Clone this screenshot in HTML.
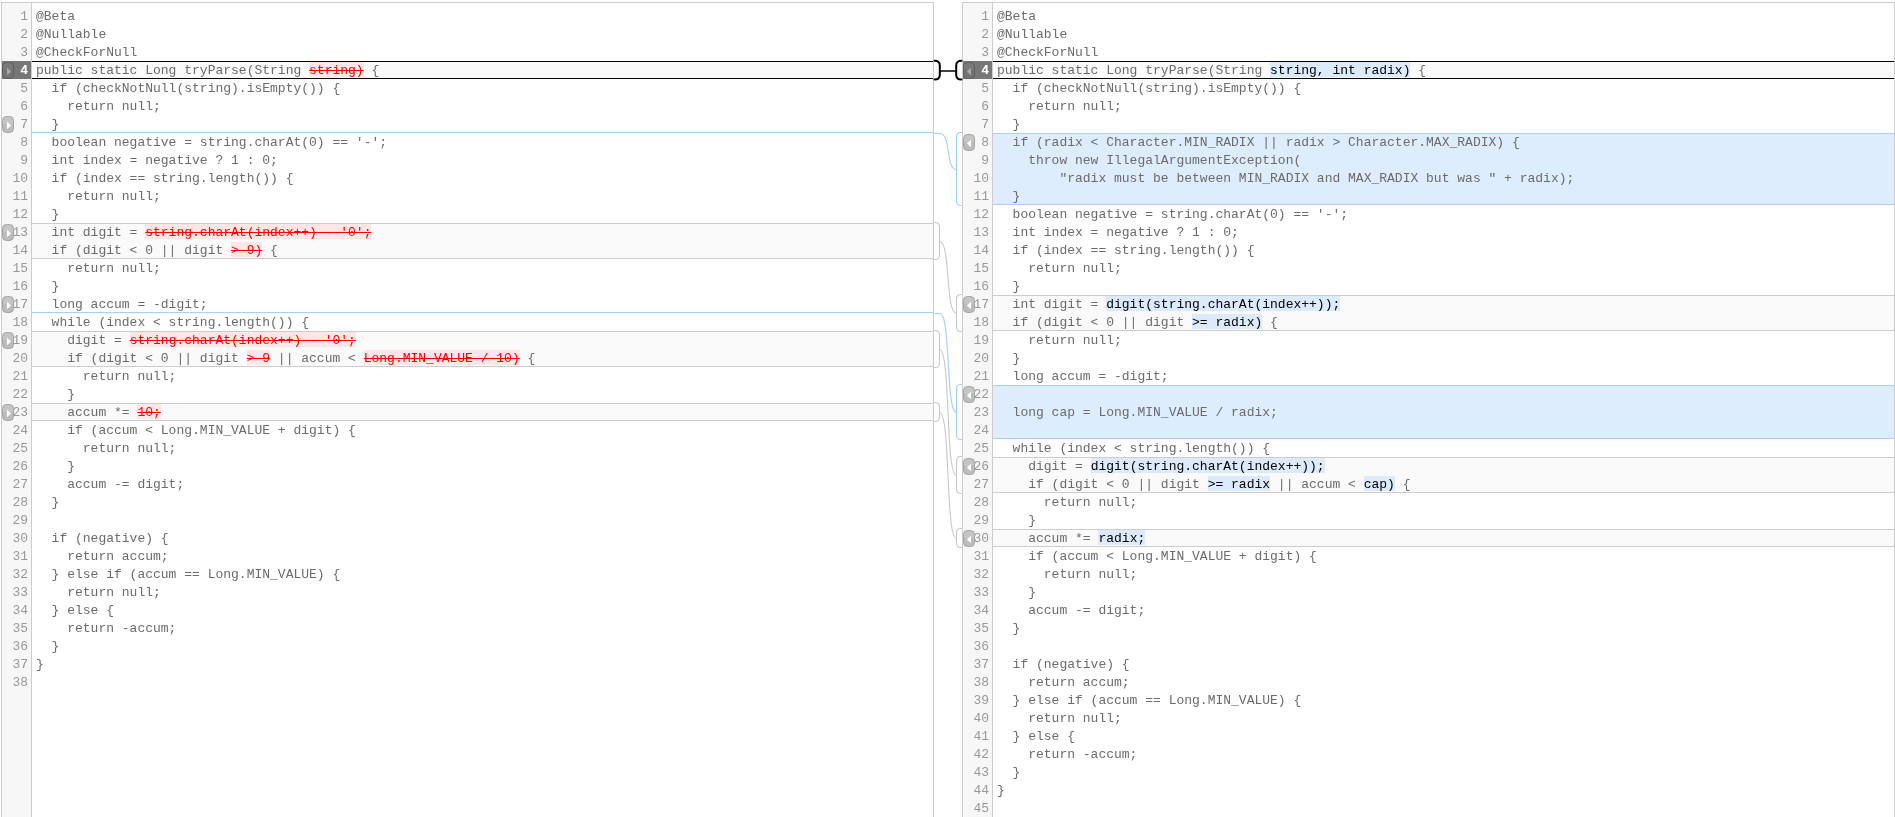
<!DOCTYPE html>
<html><head><meta charset="utf-8"><style>
*{margin:0;padding:0;box-sizing:content-box}
html,body{width:1895px;height:817px;overflow:hidden;background:#fff}
body{position:relative;font-family:"Liberation Mono",monospace;font-size:13px}
#wrap{position:absolute;left:0;top:0;width:1895px;height:817px;will-change:transform}
.ed{position:absolute;top:2px;height:900px;border:1px solid #ccc;background:#fff}
.gut{position:absolute;top:3px;width:29px;height:900px;background:#f7f7f7;border-right:1px solid #ccc}
.blk{position:absolute}
.blk.g{background:#fafafa;border-top:1px solid #ccc;border-bottom:1px solid #ccc}
.blk.b{background:#deedfd;border-top:1px solid #a5d0fa;border-bottom:1px solid #a5d0fa}
.insl{position:absolute;height:1px;background:#a5d0fa}
.sel{position:absolute;height:16px;background:#fafafa;border-top:1px solid #000;border-bottom:1px solid #000}
.gsel{position:absolute;width:29px;height:18px;background:#777}
.ln{position:absolute;width:26px;height:18px;line-height:18px;margin-top:1px;text-align:right;color:#999}
.ln.s{color:#fff;font-weight:bold}
.tx{position:absolute;height:18px;line-height:18px;margin-top:1px;white-space:pre;color:#6b6b6b}
.del{color:#f00;text-decoration:line-through;padding-top:1px;background:linear-gradient(#fde6e6,#fde6e6) no-repeat 0 0/100% 15px}
.ins{color:#000;padding-top:1px;background:linear-gradient(#dcebfc,#dcebfc) no-repeat 0 0/100% 15px}
.bsv{position:absolute}

</style></head><body><div id="wrap">
<div class="ed" style="left:1px;width:931px"></div>
<div class="gut" style="left:2px"></div>
<div class="blk g" style="left:32px;top:223px;width:901px;height:34px"></div>
<div class="blk g" style="left:32px;top:331px;width:901px;height:34px"></div>
<div class="blk g" style="left:32px;top:403px;width:901px;height:16px"></div>
<div class="insl" style="left:32px;top:132px;width:901px"></div>
<div class="insl" style="left:32px;top:312px;width:901px"></div>
<div class="sel" style="left:32px;top:61px;width:901px"></div>
<div class="gsel" style="left:2px;top:61px"></div>
<div class="ln" style="left:2px;top:7px">1</div>
<div class="tx" style="left:36px;top:7px">@Beta</div>
<div class="ln" style="left:2px;top:25px">2</div>
<div class="tx" style="left:36px;top:25px">@Nullable</div>
<div class="ln" style="left:2px;top:43px">3</div>
<div class="tx" style="left:36px;top:43px">@CheckForNull</div>
<div class="ln s" style="left:2px;top:61px">4</div>
<div class="tx" style="left:36px;top:61px">public static Long tryParse(String <span class="del">string)</span> {</div>
<div class="ln" style="left:2px;top:79px">5</div>
<div class="tx" style="left:36px;top:79px">  if (checkNotNull(string).isEmpty()) {</div>
<div class="ln" style="left:2px;top:97px">6</div>
<div class="tx" style="left:36px;top:97px">    return null;</div>
<div class="ln" style="left:2px;top:115px">7</div>
<div class="tx" style="left:36px;top:115px">  }</div>
<div class="ln" style="left:2px;top:133px">8</div>
<div class="tx" style="left:36px;top:133px">  boolean negative = string.charAt(0) == &#x27;-&#x27;;</div>
<div class="ln" style="left:2px;top:151px">9</div>
<div class="tx" style="left:36px;top:151px">  int index = negative ? 1 : 0;</div>
<div class="ln" style="left:2px;top:169px">10</div>
<div class="tx" style="left:36px;top:169px">  if (index == string.length()) {</div>
<div class="ln" style="left:2px;top:187px">11</div>
<div class="tx" style="left:36px;top:187px">    return null;</div>
<div class="ln" style="left:2px;top:205px">12</div>
<div class="tx" style="left:36px;top:205px">  }</div>
<div class="ln" style="left:2px;top:223px">13</div>
<div class="tx" style="left:36px;top:223px">  int digit = <span class="del">string.charAt(index++) - &#x27;0&#x27;;</span></div>
<div class="ln" style="left:2px;top:241px">14</div>
<div class="tx" style="left:36px;top:241px">  if (digit &lt; 0 || digit <span class="del">&gt; 9)</span> {</div>
<div class="ln" style="left:2px;top:259px">15</div>
<div class="tx" style="left:36px;top:259px">    return null;</div>
<div class="ln" style="left:2px;top:277px">16</div>
<div class="tx" style="left:36px;top:277px">  }</div>
<div class="ln" style="left:2px;top:295px">17</div>
<div class="tx" style="left:36px;top:295px">  long accum = -digit;</div>
<div class="ln" style="left:2px;top:313px">18</div>
<div class="tx" style="left:36px;top:313px">  while (index &lt; string.length()) {</div>
<div class="ln" style="left:2px;top:331px">19</div>
<div class="tx" style="left:36px;top:331px">    digit = <span class="del">string.charAt(index++) - &#x27;0&#x27;;</span></div>
<div class="ln" style="left:2px;top:349px">20</div>
<div class="tx" style="left:36px;top:349px">    if (digit &lt; 0 || digit <span class="del">&gt; 9</span> || accum &lt; <span class="del">Long.MIN_VALUE / 10)</span> {</div>
<div class="ln" style="left:2px;top:367px">21</div>
<div class="tx" style="left:36px;top:367px">      return null;</div>
<div class="ln" style="left:2px;top:385px">22</div>
<div class="tx" style="left:36px;top:385px">    }</div>
<div class="ln" style="left:2px;top:403px">23</div>
<div class="tx" style="left:36px;top:403px">    accum *= <span class="del">10;</span></div>
<div class="ln" style="left:2px;top:421px">24</div>
<div class="tx" style="left:36px;top:421px">    if (accum &lt; Long.MIN_VALUE + digit) {</div>
<div class="ln" style="left:2px;top:439px">25</div>
<div class="tx" style="left:36px;top:439px">      return null;</div>
<div class="ln" style="left:2px;top:457px">26</div>
<div class="tx" style="left:36px;top:457px">    }</div>
<div class="ln" style="left:2px;top:475px">27</div>
<div class="tx" style="left:36px;top:475px">    accum -= digit;</div>
<div class="ln" style="left:2px;top:493px">28</div>
<div class="tx" style="left:36px;top:493px">  }</div>
<div class="ln" style="left:2px;top:511px">29</div>
<div class="tx" style="left:36px;top:511px"></div>
<div class="ln" style="left:2px;top:529px">30</div>
<div class="tx" style="left:36px;top:529px">  if (negative) {</div>
<div class="ln" style="left:2px;top:547px">31</div>
<div class="tx" style="left:36px;top:547px">    return accum;</div>
<div class="ln" style="left:2px;top:565px">32</div>
<div class="tx" style="left:36px;top:565px">  } else if (accum == Long.MIN_VALUE) {</div>
<div class="ln" style="left:2px;top:583px">33</div>
<div class="tx" style="left:36px;top:583px">    return null;</div>
<div class="ln" style="left:2px;top:601px">34</div>
<div class="tx" style="left:36px;top:601px">  } else {</div>
<div class="ln" style="left:2px;top:619px">35</div>
<div class="tx" style="left:36px;top:619px">    return -accum;</div>
<div class="ln" style="left:2px;top:637px">36</div>
<div class="tx" style="left:36px;top:637px">  }</div>
<div class="ln" style="left:2px;top:655px">37</div>
<div class="tx" style="left:36px;top:655px">}</div>
<div class="ln" style="left:2px;top:673px">38</div>
<div class="tx" style="left:36px;top:673px"></div>
<svg class="bsv" style="left:2px;top:61px" width="14" height="20"><defs><linearGradient id="gL4" x1="0" y1="0" x2="0" y2="1"><stop offset="0.5" stop-color="#7a7a7a"/><stop offset="0.5" stop-color="#737373"/></linearGradient></defs><rect x="0.5" y="1.5" width="11" height="16" rx="4" fill="url(#gL4)" stroke="#5e5e5e"/><polygon points="5,6.8 9.2,10.5 5,14.2" fill="#aaa"/></svg>
<svg class="bsv" style="left:2px;top:115px" width="14" height="20"><defs><linearGradient id="gL7" x1="0" y1="0" x2="0" y2="1"><stop offset="0.5" stop-color="#c5c5c5"/><stop offset="0.5" stop-color="#bcbcbc"/></linearGradient></defs><rect x="0.5" y="1.5" width="11" height="16" rx="4" fill="url(#gL7)" stroke="#a3a3a3"/><polygon points="5,6.8 9.2,10.5 5,14.2" fill="#fff"/></svg>
<svg class="bsv" style="left:2px;top:223px" width="14" height="20"><defs><linearGradient id="gL13" x1="0" y1="0" x2="0" y2="1"><stop offset="0.5" stop-color="#c5c5c5"/><stop offset="0.5" stop-color="#bcbcbc"/></linearGradient></defs><rect x="0.5" y="1.5" width="11" height="16" rx="4" fill="url(#gL13)" stroke="#a3a3a3"/><polygon points="5,6.8 9.2,10.5 5,14.2" fill="#fff"/></svg>
<svg class="bsv" style="left:2px;top:295px" width="14" height="20"><defs><linearGradient id="gL17" x1="0" y1="0" x2="0" y2="1"><stop offset="0.5" stop-color="#c5c5c5"/><stop offset="0.5" stop-color="#bcbcbc"/></linearGradient></defs><rect x="0.5" y="1.5" width="11" height="16" rx="4" fill="url(#gL17)" stroke="#a3a3a3"/><polygon points="5,6.8 9.2,10.5 5,14.2" fill="#fff"/></svg>
<svg class="bsv" style="left:2px;top:331px" width="14" height="20"><defs><linearGradient id="gL19" x1="0" y1="0" x2="0" y2="1"><stop offset="0.5" stop-color="#c5c5c5"/><stop offset="0.5" stop-color="#bcbcbc"/></linearGradient></defs><rect x="0.5" y="1.5" width="11" height="16" rx="4" fill="url(#gL19)" stroke="#a3a3a3"/><polygon points="5,6.8 9.2,10.5 5,14.2" fill="#fff"/></svg>
<svg class="bsv" style="left:2px;top:403px" width="14" height="20"><defs><linearGradient id="gL23" x1="0" y1="0" x2="0" y2="1"><stop offset="0.5" stop-color="#c5c5c5"/><stop offset="0.5" stop-color="#bcbcbc"/></linearGradient></defs><rect x="0.5" y="1.5" width="11" height="16" rx="4" fill="url(#gL23)" stroke="#a3a3a3"/><polygon points="5,6.8 9.2,10.5 5,14.2" fill="#fff"/></svg>
<div class="ed" style="left:962px;width:931px"></div>
<div class="gut" style="left:963px"></div>
<div class="blk b" style="left:993px;top:133px;width:901px;height:70px"></div>
<div class="blk g" style="left:993px;top:295px;width:901px;height:34px"></div>
<div class="blk b" style="left:993px;top:385px;width:901px;height:52px"></div>
<div class="blk g" style="left:993px;top:457px;width:901px;height:34px"></div>
<div class="blk g" style="left:993px;top:529px;width:901px;height:16px"></div>
<div class="sel" style="left:993px;top:61px;width:901px"></div>
<div class="gsel" style="left:963px;top:61px"></div>
<div class="ln" style="left:963px;top:7px">1</div>
<div class="tx" style="left:997px;top:7px">@Beta</div>
<div class="ln" style="left:963px;top:25px">2</div>
<div class="tx" style="left:997px;top:25px">@Nullable</div>
<div class="ln" style="left:963px;top:43px">3</div>
<div class="tx" style="left:997px;top:43px">@CheckForNull</div>
<div class="ln s" style="left:963px;top:61px">4</div>
<div class="tx" style="left:997px;top:61px">public static Long tryParse(String <span class="ins">string, int radix)</span> {</div>
<div class="ln" style="left:963px;top:79px">5</div>
<div class="tx" style="left:997px;top:79px">  if (checkNotNull(string).isEmpty()) {</div>
<div class="ln" style="left:963px;top:97px">6</div>
<div class="tx" style="left:997px;top:97px">    return null;</div>
<div class="ln" style="left:963px;top:115px">7</div>
<div class="tx" style="left:997px;top:115px">  }</div>
<div class="ln" style="left:963px;top:133px">8</div>
<div class="tx" style="left:997px;top:133px">  if (radix &lt; Character.MIN_RADIX || radix &gt; Character.MAX_RADIX) {</div>
<div class="ln" style="left:963px;top:151px">9</div>
<div class="tx" style="left:997px;top:151px">    throw new IllegalArgumentException(</div>
<div class="ln" style="left:963px;top:169px">10</div>
<div class="tx" style="left:997px;top:169px">        &quot;radix must be between MIN_RADIX and MAX_RADIX but was &quot; + radix);</div>
<div class="ln" style="left:963px;top:187px">11</div>
<div class="tx" style="left:997px;top:187px">  }</div>
<div class="ln" style="left:963px;top:205px">12</div>
<div class="tx" style="left:997px;top:205px">  boolean negative = string.charAt(0) == &#x27;-&#x27;;</div>
<div class="ln" style="left:963px;top:223px">13</div>
<div class="tx" style="left:997px;top:223px">  int index = negative ? 1 : 0;</div>
<div class="ln" style="left:963px;top:241px">14</div>
<div class="tx" style="left:997px;top:241px">  if (index == string.length()) {</div>
<div class="ln" style="left:963px;top:259px">15</div>
<div class="tx" style="left:997px;top:259px">    return null;</div>
<div class="ln" style="left:963px;top:277px">16</div>
<div class="tx" style="left:997px;top:277px">  }</div>
<div class="ln" style="left:963px;top:295px">17</div>
<div class="tx" style="left:997px;top:295px">  int digit = <span class="ins">digit(string.charAt(index++));</span></div>
<div class="ln" style="left:963px;top:313px">18</div>
<div class="tx" style="left:997px;top:313px">  if (digit &lt; 0 || digit <span class="ins">&gt;= radix)</span> {</div>
<div class="ln" style="left:963px;top:331px">19</div>
<div class="tx" style="left:997px;top:331px">    return null;</div>
<div class="ln" style="left:963px;top:349px">20</div>
<div class="tx" style="left:997px;top:349px">  }</div>
<div class="ln" style="left:963px;top:367px">21</div>
<div class="tx" style="left:997px;top:367px">  long accum = -digit;</div>
<div class="ln" style="left:963px;top:385px">22</div>
<div class="tx" style="left:997px;top:385px"></div>
<div class="ln" style="left:963px;top:403px">23</div>
<div class="tx" style="left:997px;top:403px">  long cap = Long.MIN_VALUE / radix;</div>
<div class="ln" style="left:963px;top:421px">24</div>
<div class="tx" style="left:997px;top:421px"></div>
<div class="ln" style="left:963px;top:439px">25</div>
<div class="tx" style="left:997px;top:439px">  while (index &lt; string.length()) {</div>
<div class="ln" style="left:963px;top:457px">26</div>
<div class="tx" style="left:997px;top:457px">    digit = <span class="ins">digit(string.charAt(index++));</span></div>
<div class="ln" style="left:963px;top:475px">27</div>
<div class="tx" style="left:997px;top:475px">    if (digit &lt; 0 || digit <span class="ins">&gt;= radix</span> || accum &lt; <span class="ins">cap)</span> {</div>
<div class="ln" style="left:963px;top:493px">28</div>
<div class="tx" style="left:997px;top:493px">      return null;</div>
<div class="ln" style="left:963px;top:511px">29</div>
<div class="tx" style="left:997px;top:511px">    }</div>
<div class="ln" style="left:963px;top:529px">30</div>
<div class="tx" style="left:997px;top:529px">    accum *= <span class="ins">radix;</span></div>
<div class="ln" style="left:963px;top:547px">31</div>
<div class="tx" style="left:997px;top:547px">    if (accum &lt; Long.MIN_VALUE + digit) {</div>
<div class="ln" style="left:963px;top:565px">32</div>
<div class="tx" style="left:997px;top:565px">      return null;</div>
<div class="ln" style="left:963px;top:583px">33</div>
<div class="tx" style="left:997px;top:583px">    }</div>
<div class="ln" style="left:963px;top:601px">34</div>
<div class="tx" style="left:997px;top:601px">    accum -= digit;</div>
<div class="ln" style="left:963px;top:619px">35</div>
<div class="tx" style="left:997px;top:619px">  }</div>
<div class="ln" style="left:963px;top:637px">36</div>
<div class="tx" style="left:997px;top:637px"></div>
<div class="ln" style="left:963px;top:655px">37</div>
<div class="tx" style="left:997px;top:655px">  if (negative) {</div>
<div class="ln" style="left:963px;top:673px">38</div>
<div class="tx" style="left:997px;top:673px">    return accum;</div>
<div class="ln" style="left:963px;top:691px">39</div>
<div class="tx" style="left:997px;top:691px">  } else if (accum == Long.MIN_VALUE) {</div>
<div class="ln" style="left:963px;top:709px">40</div>
<div class="tx" style="left:997px;top:709px">    return null;</div>
<div class="ln" style="left:963px;top:727px">41</div>
<div class="tx" style="left:997px;top:727px">  } else {</div>
<div class="ln" style="left:963px;top:745px">42</div>
<div class="tx" style="left:997px;top:745px">    return -accum;</div>
<div class="ln" style="left:963px;top:763px">43</div>
<div class="tx" style="left:997px;top:763px">  }</div>
<div class="ln" style="left:963px;top:781px">44</div>
<div class="tx" style="left:997px;top:781px">}</div>
<div class="ln" style="left:963px;top:799px">45</div>
<div class="tx" style="left:997px;top:799px"></div>
<svg class="bsv" style="left:963px;top:61px" width="14" height="20"><defs><linearGradient id="gR4" x1="0" y1="0" x2="0" y2="1"><stop offset="0.5" stop-color="#7a7a7a"/><stop offset="0.5" stop-color="#737373"/></linearGradient></defs><rect x="0.5" y="1.5" width="11" height="16" rx="4" fill="url(#gR4)" stroke="#5e5e5e"/><polygon points="8,6.8 3.8,10.5 8,14.2" fill="#aaa"/></svg>
<svg class="bsv" style="left:963px;top:133px" width="14" height="20"><defs><linearGradient id="gR8" x1="0" y1="0" x2="0" y2="1"><stop offset="0.5" stop-color="#c5c5c5"/><stop offset="0.5" stop-color="#bcbcbc"/></linearGradient></defs><rect x="0.5" y="1.5" width="11" height="16" rx="4" fill="url(#gR8)" stroke="#a3a3a3"/><polygon points="8,6.8 3.8,10.5 8,14.2" fill="#fff"/></svg>
<svg class="bsv" style="left:963px;top:295px" width="14" height="20"><defs><linearGradient id="gR17" x1="0" y1="0" x2="0" y2="1"><stop offset="0.5" stop-color="#c5c5c5"/><stop offset="0.5" stop-color="#bcbcbc"/></linearGradient></defs><rect x="0.5" y="1.5" width="11" height="16" rx="4" fill="url(#gR17)" stroke="#a3a3a3"/><polygon points="8,6.8 3.8,10.5 8,14.2" fill="#fff"/></svg>
<svg class="bsv" style="left:963px;top:385px" width="14" height="20"><defs><linearGradient id="gR22" x1="0" y1="0" x2="0" y2="1"><stop offset="0.5" stop-color="#c5c5c5"/><stop offset="0.5" stop-color="#bcbcbc"/></linearGradient></defs><rect x="0.5" y="1.5" width="11" height="16" rx="4" fill="url(#gR22)" stroke="#a3a3a3"/><polygon points="8,6.8 3.8,10.5 8,14.2" fill="#fff"/></svg>
<svg class="bsv" style="left:963px;top:457px" width="14" height="20"><defs><linearGradient id="gR26" x1="0" y1="0" x2="0" y2="1"><stop offset="0.5" stop-color="#c5c5c5"/><stop offset="0.5" stop-color="#bcbcbc"/></linearGradient></defs><rect x="0.5" y="1.5" width="11" height="16" rx="4" fill="url(#gR26)" stroke="#a3a3a3"/><polygon points="8,6.8 3.8,10.5 8,14.2" fill="#fff"/></svg>
<svg class="bsv" style="left:963px;top:529px" width="14" height="20"><defs><linearGradient id="gR30" x1="0" y1="0" x2="0" y2="1"><stop offset="0.5" stop-color="#c5c5c5"/><stop offset="0.5" stop-color="#bcbcbc"/></linearGradient></defs><rect x="0.5" y="1.5" width="11" height="16" rx="4" fill="url(#gR30)" stroke="#a3a3a3"/><polygon points="8,6.8 3.8,10.5 8,14.2" fill="#fff"/></svg>
<svg style="position:absolute;left:0;top:0" width="1895" height="817">
<g fill="none" stroke-linecap="round">
<path d="M934.5,60.8 Q939.8,60.8 939.8,65.5 L939.8,75 Q939.8,79.6 934.5,79.6" stroke="#000" stroke-width="2"/>
<path d="M961.5,60.8 Q956.2,60.8 956.2,65.5 L956.2,75 Q956.2,79.6 961.5,79.6" stroke="#000" stroke-width="2"/>
<path d="M940,71 L956,71" stroke="#000" stroke-width="1.7"/>
</g>
<g fill="none" stroke="#a5d0fa" stroke-width="1.2">
<path d="M934,133.5 L940,133.5 C951.1,133.5 945.4,169.5 956.5,169.5"/>
<path d="M962,132.5 L961.0,132.5 Q956.5,132.5 956.5,137.0 L956.5,201.0 Q956.5,205.5 961.0,205.5 L962,205.5"/>
<path d="M934,313.5 L940,313.5 C951.1,313.5 945.4,412.5 956.5,412.5"/>
<path d="M962,384.5 L961.0,384.5 Q956.5,384.5 956.5,389.0 L956.5,435.0 Q956.5,439.5 961.0,439.5 L962,439.5"/>
</g>
<g fill="none" stroke="#c8c8c8" stroke-width="1.1">
<path d="M934,222.5 L935.0,222.5 Q939.5,222.5 939.5,227.0 L939.5,255.0 Q939.5,259.5 935.0,259.5 L934,259.5"/>
<path d="M939.5,241.5 C950.9,241.5 945.1,313.5 956.5,313.5"/>
<path d="M962,294.5 L961.0,294.5 Q956.5,294.5 956.5,299.0 L956.5,327.0 Q956.5,331.5 961.0,331.5 L962,331.5"/>
<path d="M934,330.5 L935.0,330.5 Q939.5,330.5 939.5,335.0 L939.5,363.0 Q939.5,367.5 935.0,367.5 L934,367.5"/>
<path d="M939.5,349.5 C950.9,349.5 945.1,475.5 956.5,475.5"/>
<path d="M962,456.5 L961.0,456.5 Q956.5,456.5 956.5,461.0 L956.5,489.0 Q956.5,493.5 961.0,493.5 L962,493.5"/>
<path d="M934,402.5 L935.0,402.5 Q939.5,402.5 939.5,407.0 L939.5,417.0 Q939.5,421.5 935.0,421.5 L934,421.5"/>
<path d="M939.5,412.5 C950.9,412.5 945.1,538.5 956.5,538.5"/>
<path d="M962,528.5 L961.0,528.5 Q956.5,528.5 956.5,533.0 L956.5,543.0 Q956.5,547.5 961.0,547.5 L962,547.5"/>
</g>
</svg>
</div></body></html>
